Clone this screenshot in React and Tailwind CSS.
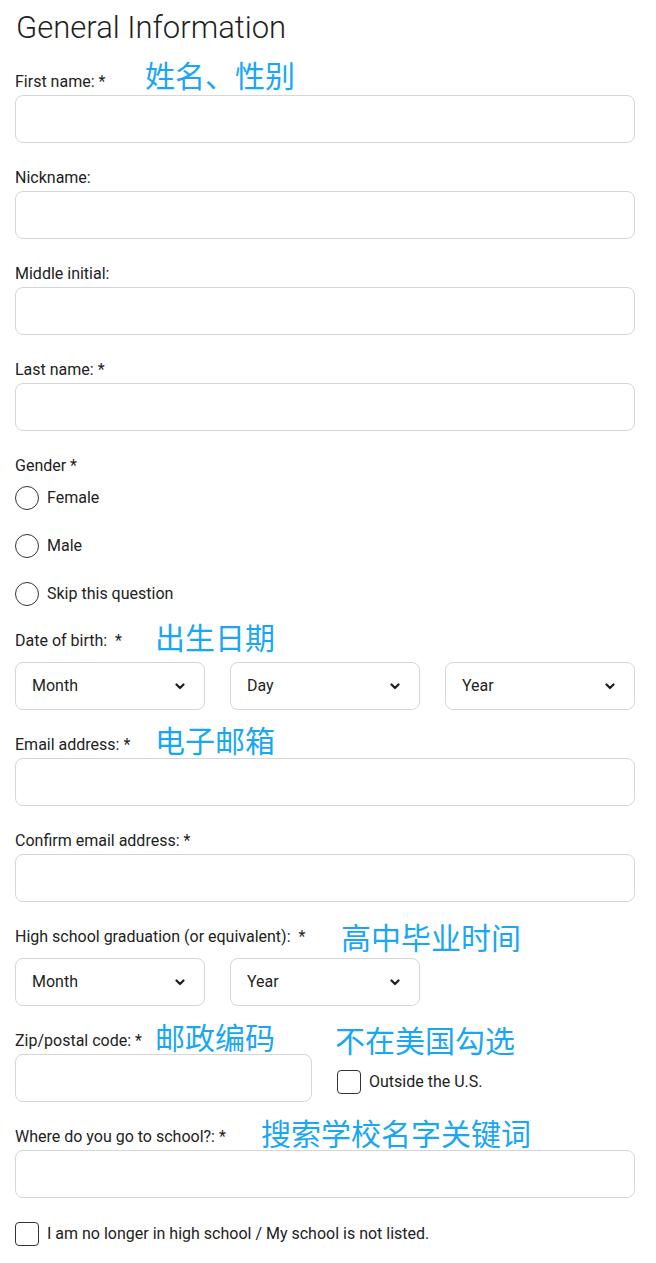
import React from "react";

const Ann = ({ children, className }) => (
  <span
    className={`absolute -translate-y-1/2 whitespace-nowrap text-[30px] leading-none text-[#19a7f5] ${className}`}
    style={{ fontFamily: '"Noto Sans CJK SC", sans-serif' }}
  >
    {children}
  </span>
);

const Label = ({ children, ann, annClass, mb = "mb-[3px]" }) => (
  <div className={`relative h-5 ${mb} text-base leading-5 text-[#222]`}>
    {children}
    {ann && <Ann className={annClass}>{ann}</Ann>}
  </div>
);

const Input = ({ w = "w-[620px]" }) => (
  <div className={`${w} h-12 rounded-lg border border-[#d6d6d6] bg-white`} />
);

const Chevron = () => (
  <svg width="10" height="7" viewBox="0 0 10 7" className="shrink-0">
    <path d="M1.5 1.5 L5 5 L8.5 1.5" fill="none" stroke="#1f1f1f" strokeWidth="2.2" strokeLinecap="round" strokeLinejoin="round" />
  </svg>
);

const Select = ({ text }) => (
  <div className="flex h-12 w-[190px] items-center justify-between rounded-lg border border-[#d6d6d6] bg-white pl-4 pr-[19px] text-base text-[#1f1f1f]">
    <span>{text}</span>
    <Chevron />
  </div>
);

const Radio = ({ label }) => (
  <div className="flex h-6 items-center gap-2">
    <div className="h-6 w-6 rounded-full border-[1.5px] border-[#333]" />
    <span className="text-base text-[#222]">{label}</span>
  </div>
);

const Check = ({ label }) => (
  <div className="flex h-6 items-center gap-2">
    <div className="h-6 w-6 rounded-[4px] border-[1.5px] border-[#333]" />
    <span className="text-base text-[#222]">{label}</span>
  </div>
);

export default function App() {
  return (
    <div
      className="w-[656px] bg-white pl-[15px] pb-4 pt-[10px]"
      style={{ fontFamily: 'Roboto, "Noto Sans", sans-serif' }}
    >
      <h1 className="mb-[26px] pl-[1px] text-[31px] font-light leading-9 text-[#1f1f1f]">General Information</h1>

      <div className="flex flex-col gap-[25px]">
        <div>
          <Label ann="姓名、性别" annClass="left-[130px] top-[2px]">First name: *</Label>
          <Input />
        </div>
        <div>
          <Label>Nickname:</Label>
          <Input />
        </div>
        <div>
          <Label>Middle initial:</Label>
          <Input />
        </div>
        <div>
          <Label>Last name: *</Label>
          <Input />
        </div>
        <div>
          <Label mb="mb-[10px]">Gender *</Label>
          <div className="flex flex-col gap-6">
            <Radio label="Female" />
            <Radio label="Male" />
            <Radio label="Skip this question" />
          </div>
        </div>
        <div>
          <Label ann="出生日期" annClass="left-[140px] top-[5px]" mb="mb-[11px]">Date of birth:&nbsp; *</Label>
          <div className="flex gap-[25px]">
            <Select text="Month" />
            <Select text="Day" />
            <Select text="Year" />
          </div>
        </div>
        <div>
          <Label ann="电子邮箱" annClass="left-[140px] top-[4px]">Email address: *</Label>
          <Input />
        </div>
        <div>
          <Label>Confirm email address: *</Label>
          <Input />
        </div>
        <div>
          <Label ann="高中毕业时间" annClass="left-[326px] top-[9px]" mb="mb-[11px]">High school graduation (or equivalent):&nbsp; *</Label>
          <div className="flex gap-[25px]">
            <Select text="Month" />
            <Select text="Year" />
          </div>
        </div>
        <div className="relative">
          <Label ann="邮政编码" annClass="left-[140px] top-[5px]">Zip/postal code: *</Label>
          <Ann className="left-[320px] top-[8px]">不在美国勾选</Ann>
          <div className="flex items-center gap-[25px]">
            <Input w="w-[297px]" />
            <div className="mt-[7px]">
              <Check label="Outside the U.S." />
            </div>
          </div>
        </div>
        <div>
          <Label ann="搜索学校名字关键词" annClass="left-[246px] top-[5px]">Where do you go to school?: *</Label>
          <Input />
        </div>
        <div className="-mt-px">
          <Check label="I am no longer in high school / My school is not listed." />
        </div>
      </div>
    </div>
  );
}
